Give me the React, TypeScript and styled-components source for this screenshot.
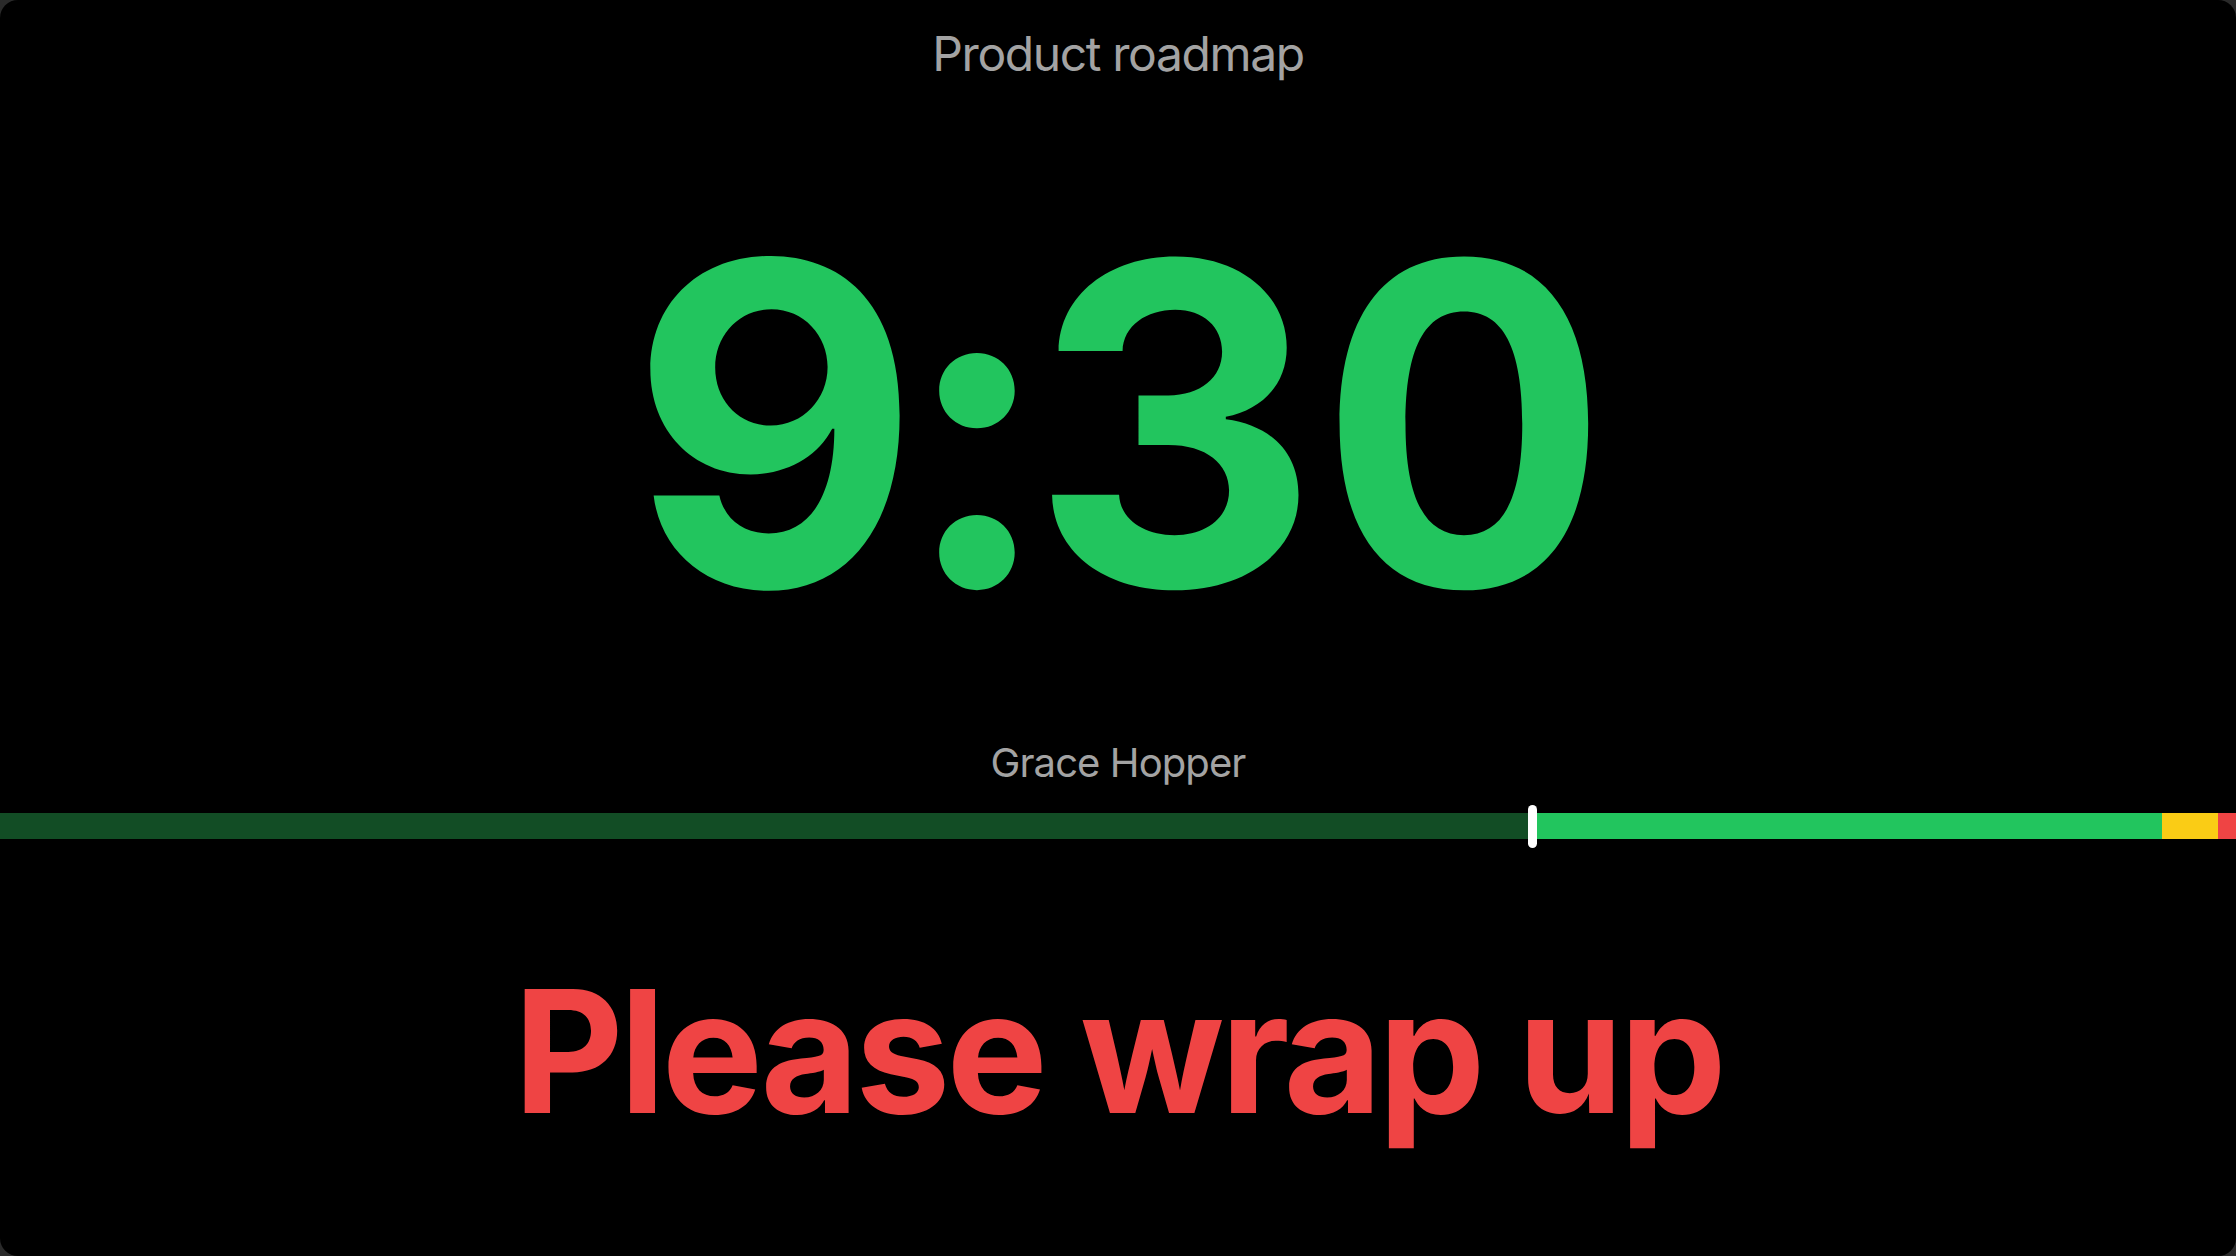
import styled, { createGlobalStyle } from "styled-components";

const GlobalStyle = createGlobalStyle`
  html, body {
    margin: 0;
    padding: 0;
    background: #2a2a2a;
  }
  body {
    font-family: "Inter", "Liberation Sans", sans-serif;
  }
`;

const segments = [
  { color: "#124d25", width: 1532 },
  { color: "#22c55e", width: 630 },
  { color: "#facc15", width: 56 },
  { color: "#ef4444", width: 18 },
];

const markerAt = 1532;

const App = () => {
  return (
    <>
      <GlobalStyle />
      <Screen>
        <Title>Product roadmap</Title>
        <Clock>9:30</Clock>
        <Speaker>Grace Hopper</Speaker>
        <Bar>
          {segments.map((s, i) => (
            <Segment key={i} $color={s.color} style={{ flexBasis: s.width }} />
          ))}
          <Marker style={{ left: markerAt - 4 }} />
        </Bar>
        <Message>Please wrap up</Message>
      </Screen>
    </>
  );
};

const Screen = styled.main`
  display: flex;
  flex-direction: column;
  align-items: center;
  width: 2236px;
  height: 1256px;
  background: #000;
  border-radius: 18px;
  overflow: hidden;
  box-sizing: border-box;
  padding-top: 30px;
`;

const Title = styled.h1`
  margin: 0;
  font-size: 48px;
  line-height: 1;
  font-weight: 400;
  color: #a3a3a3;
  letter-spacing: -1.4px;
`;

const Clock = styled.div`
  margin-top: 122px;
  font-size: 447px;
  line-height: 1;
  font-weight: 700;
  color: #22c55e;
  letter-spacing: -3px;
  font-variant-numeric: tabular-nums;
`;

const Speaker = styled.div`
  margin-top: 96px;
  font-size: 40px;
  line-height: 1;
  color: #a3a3a3;
  letter-spacing: -0.9px;
`;

const Bar = styled.div`
  position: relative;
  display: flex;
  width: 100%;
  height: 26px;
  margin-top: 30px;
`;

const Segment = styled.div<{ $color: string }>`
  flex-shrink: 0;
  flex-grow: 0;
  height: 100%;
  background: ${(p) => p.$color};
`;

const Marker = styled.span`
  position: absolute;
  top: -8px;
  width: 9px;
  height: 43px;
  border-radius: 5px;
  background: #fff;
`;

const Message = styled.div`
  margin-top: 127px;
  font-size: 170px;
  line-height: 1;
  font-weight: 700;
  color: #ef4444;
  letter-spacing: -4px;
`;

export default App;
